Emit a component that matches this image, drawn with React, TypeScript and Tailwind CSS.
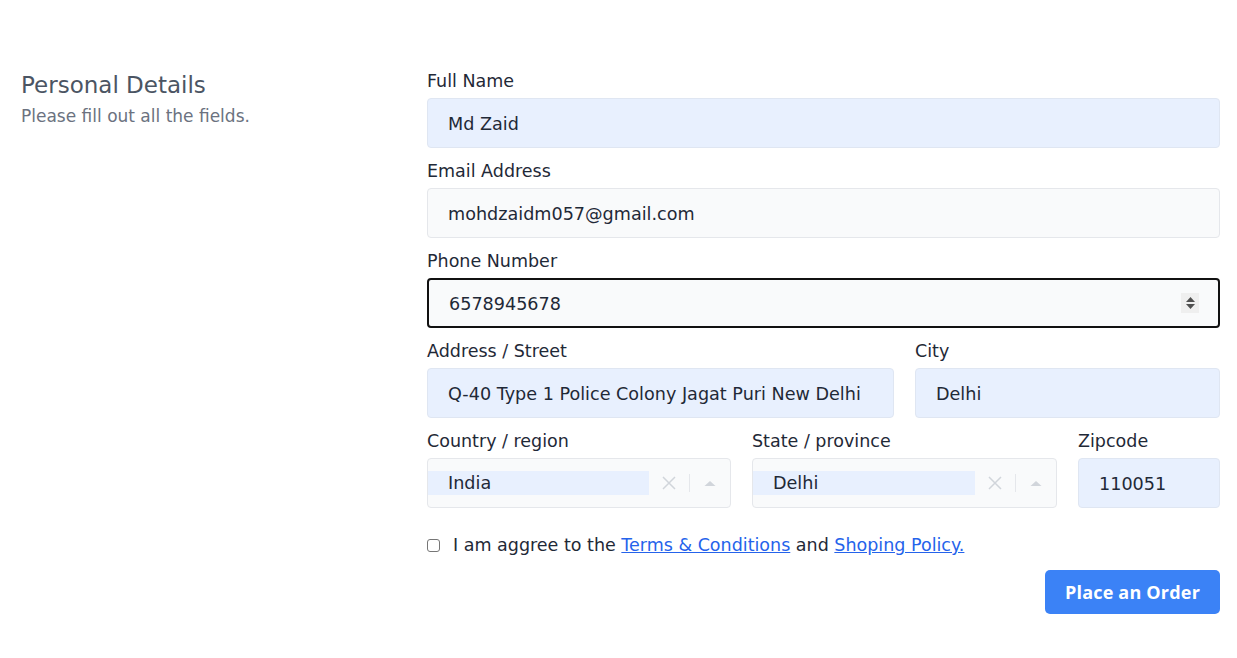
import React from "react";

const font = { fontFamily: '"DejaVu Sans", "Open Sans", sans-serif' };

function Label({ children }: { children: React.ReactNode }) {
  return <div className="h-6 text-[17.5px] leading-6 text-[#1f2937]">{children}</div>;
}

function Field({ label, value, variant = "fill" }: { label: string; value: string; variant?: "fill" | "plain" }) {
  return (
    <div className="flex flex-col gap-[5px]">
      <Label>{label}</Label>
      <input
        readOnly
        value={value}
        className={
          "h-[50px] w-full rounded-[4px] border px-5 pt-[2px] text-[17.6px] text-[#1f2937] outline-none " +
          (variant === "fill" ? "border-[#dfe6f2] bg-[#e8f0fe]" : "border-[#e5e7eb] bg-[#f9fafb]")
        }
      />
    </div>
  );
}

function SelectField({ label, value }: { label: string; value: string }) {
  return (
    <div className="flex flex-col gap-[5px]">
      <Label>{label}</Label>
      <div className="flex h-[50px] items-center rounded-[4px] border border-[#e5e7eb] bg-[#f9fafb]">
        <div className="flex h-6 flex-1 items-center bg-[#e8f0fe] pl-5 pt-[1px] text-[17.6px] text-[#1f2937]">{value}</div>
        <div className="flex w-10 items-center justify-center text-[#d1d5db]">
          <svg width="14" height="14" viewBox="0 0 14 14" fill="none" stroke="currentColor" strokeWidth="1.5">
            <path d="M1 1l12 12M13 1L1 13" />
          </svg>
        </div>
        <div className="h-[18px] w-px bg-[#e5e7eb]" />
        <div className="flex w-10 items-center justify-center">
          <svg width="12" height="7" viewBox="0 0 12 7">
            <path d="M6 1L11.5 6H0.5z" fill="#d1d5db" />
          </svg>
        </div>
      </div>
    </div>
  );
}

export default function App() {
  return (
    <div className="flex min-h-[658px] bg-white pl-[21px] pr-[17px] pt-[69px]" style={font}>
      <div className="mt-[2px] w-[406px] shrink-0">
        <h2 className="text-[23px] leading-7 text-[#4b5563]">Personal Details</h2>
        <p className="mt-[5px] text-[17px] leading-6 text-[#6b7280]">Please fill out all the fields.</p>
      </div>
      <div className="flex flex-1 flex-col gap-[11px]">
        <Field label="Full Name" value="Md Zaid" />
        <Field label="Email Address" value="mohdzaidm057@gmail.com" variant="plain" />
        <div className="flex flex-col gap-[5px]">
          <Label>Phone Number</Label>
          <div className="relative">
            <input
              readOnly
              value="6578945678"
              className="h-[50px] w-full rounded-[4px] border-2 border-[#111111] bg-[#f9fafb] px-5 pt-[2px] text-[17.6px] text-[#1f2937] outline-none"
            />
            <div className="absolute right-[21px] top-[15px] flex h-5 w-[18px] flex-col items-center justify-center gap-[2px] bg-[#efefef]">
              <svg width="9" height="5" viewBox="0 0 9 5"><path d="M4.5 0L9 5H0z" fill="#505050" /></svg>
              <svg width="9" height="5" viewBox="0 0 9 5"><path d="M0 0h9L4.5 5z" fill="#505050" /></svg>
            </div>
          </div>
        </div>
        <div className="grid grid-cols-[467px_1fr] gap-[21px]">
          <Field label="Address / Street" value="Q-40 Type 1 Police Colony Jagat Puri New Delhi" />
          <Field label="City" value="Delhi" />
        </div>
        <div className="grid grid-cols-[304px_305px_1fr] gap-[21px]">
          <SelectField label="Country / region" value="India" />
          <SelectField label="State / province" value="Delhi" />
          <Field label="Zipcode" value="110051" />
        </div>
        <div className="mt-[14px] flex h-6 items-center text-[17.5px] leading-6 text-[#1f2937]">
          <span className="h-[13px] w-[13px] rounded-[3px] border border-[#767676] bg-white" />
          <span className="ml-[13px]">
            I am aggree to the{" "}
            <a className="text-[#2563eb] underline">Terms &amp; Conditions</a> and{" "}
            <a className="text-[#2563eb] underline">Shoping Policy.</a>
          </span>
        </div>
        <div className="flex justify-end pt-[2px]">
          <button
            className="h-[44px] w-[175px] rounded-[5px] bg-[#3b82f6] text-[18px] font-bold tracking-[0.2px] text-white"
            style={{ fontFamily: '"Open Sans", sans-serif' }}
          >
            Place an Order
          </button>
        </div>
      </div>
    </div>
  );
}
